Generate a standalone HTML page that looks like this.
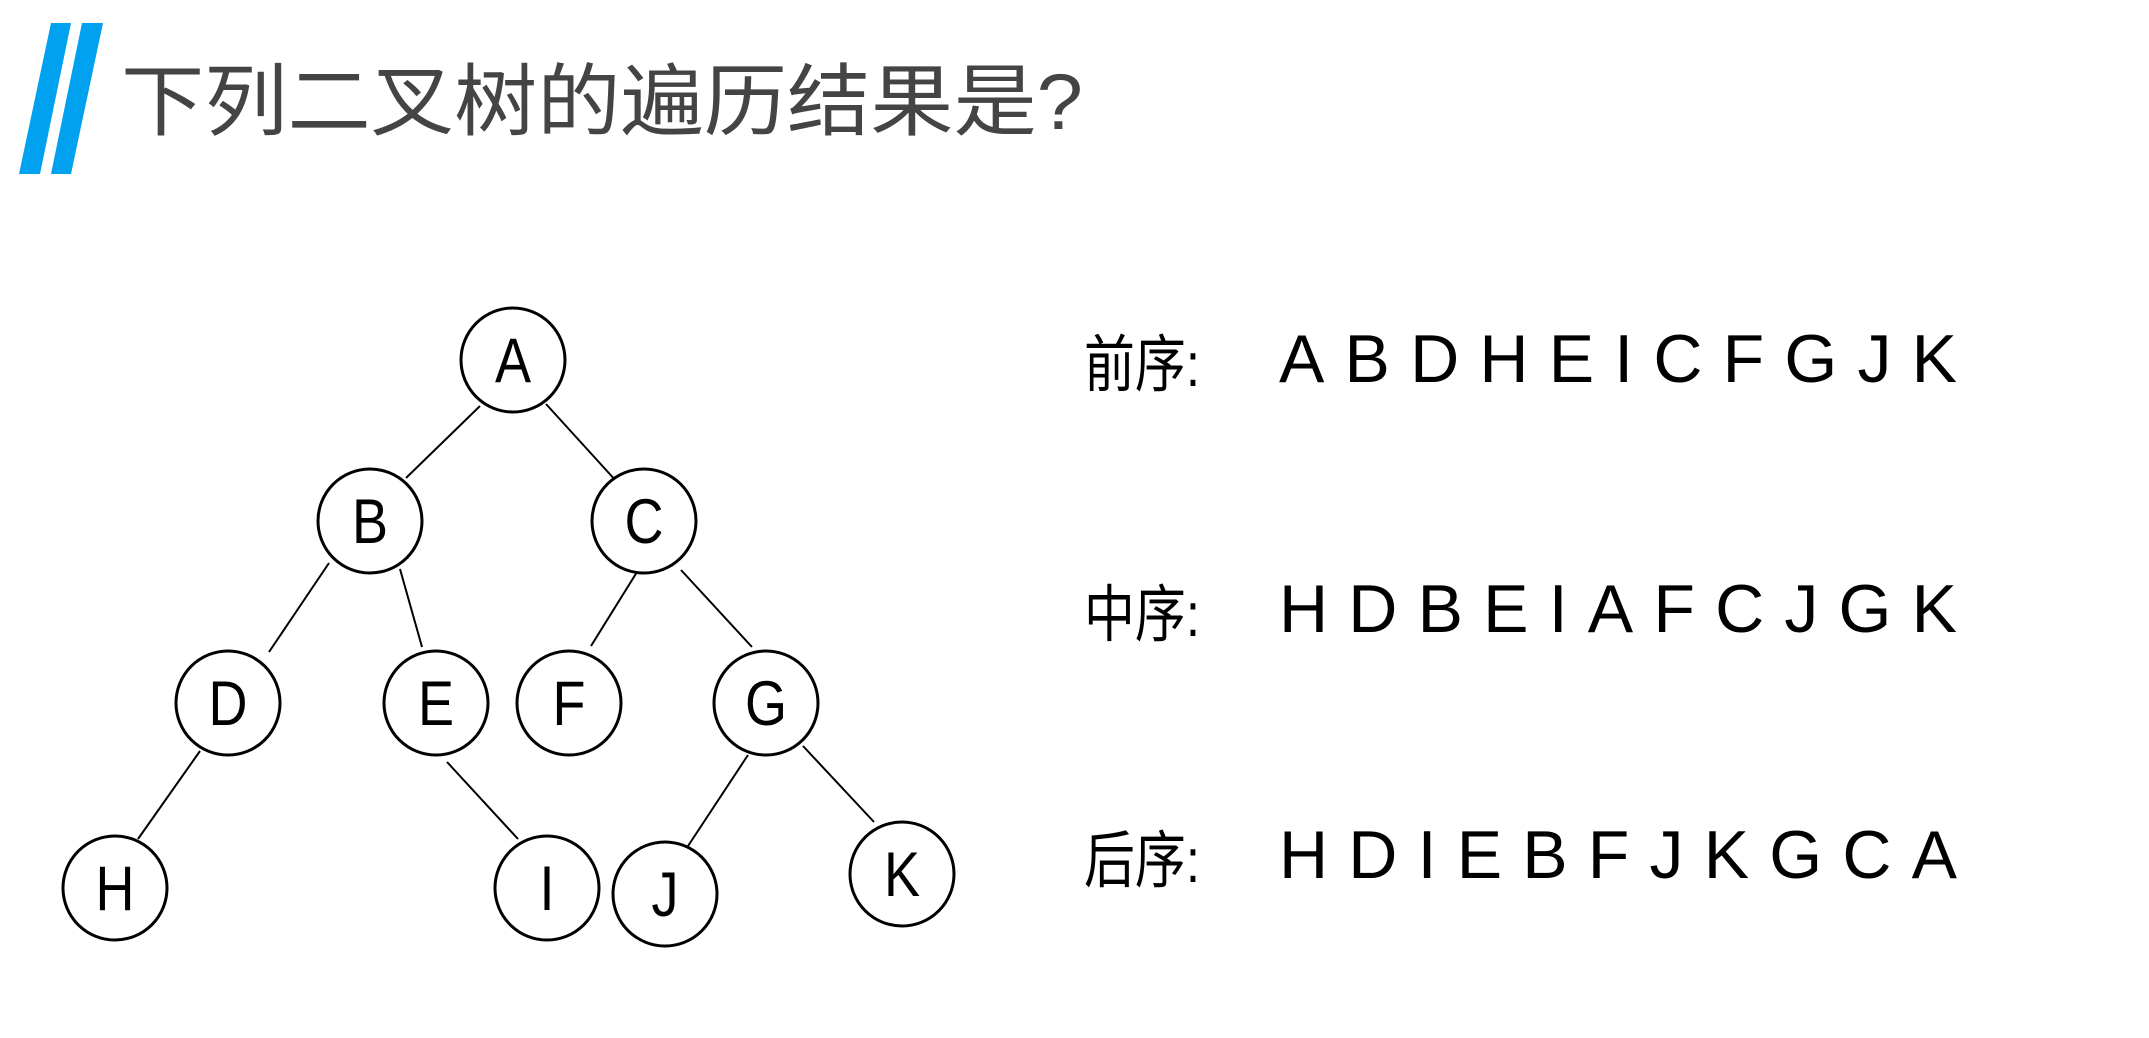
<!DOCTYPE html>
<html><head><meta charset="utf-8"><style>
html,body{margin:0;padding:0;background:#fff;width:2149px;height:1038px;overflow:hidden}
svg{display:block}
</style></head><body>
<svg width="2149" height="1038" viewBox="0 0 2149 1038" xmlns="http://www.w3.org/2000/svg">
<polygon points="51,23 71,23 40,174 19,174" fill="#00a2ef"/>
<polygon points="82,23 103,23 71,174 51,174" fill="#00a2ef"/>
<text x="121" y="130" font-family="Liberation Sans, Noto Sans CJK SC, sans-serif" font-size="72" fill="#444" textLength="962" lengthAdjust="spacingAndGlyphs" transform="translate(0,-14) scale(1,1.1)">下列二叉树的遍历结果是?</text>
<g stroke="#000" stroke-width="2" fill="none">
<line x1="480" y1="406" x2="406" y2="478"/>
<line x1="546" y1="404" x2="617" y2="482"/>
<line x1="329" y1="563" x2="269" y2="652"/>
<line x1="400" y1="569" x2="422" y2="647"/>
<line x1="637" y1="572" x2="591" y2="646"/>
<line x1="681" y1="570" x2="752" y2="647"/>
<line x1="200" y1="751" x2="138" y2="839"/>
<line x1="447" y1="762" x2="518" y2="839"/>
<line x1="748" y1="755" x2="688" y2="846"/>
<line x1="803" y1="746" x2="874" y2="822"/>
</g>
<g stroke="#000" stroke-width="3" fill="#fff">
<circle cx="513" cy="360" r="52"/>
<circle cx="370" cy="521" r="52"/>
<circle cx="644" cy="521" r="52"/>
<circle cx="228" cy="703" r="52"/>
<circle cx="436" cy="703" r="52"/>
<circle cx="569" cy="703" r="52"/>
<circle cx="766" cy="703" r="52"/>
<circle cx="115" cy="888" r="52"/>
<circle cx="547" cy="888" r="52"/>
<circle cx="665" cy="894" r="52"/>
<circle cx="902" cy="874" r="52"/>
</g>
<g font-family="Liberation Sans, sans-serif" font-size="60" fill="#000" text-anchor="middle">
<text transform="translate(513,382) scale(0.9,1.05)">A</text>
<text transform="translate(370,543) scale(0.9,1.05)">B</text>
<text transform="translate(644,543) scale(0.9,1.05)">C</text>
<text transform="translate(228,725) scale(0.9,1.05)">D</text>
<text transform="translate(436,725) scale(0.9,1.05)">E</text>
<text transform="translate(569,725) scale(0.9,1.05)">F</text>
<text transform="translate(766,725) scale(0.9,1.05)">G</text>
<text transform="translate(115,910) scale(0.9,1.05)">H</text>
<text transform="translate(547,910) scale(0.9,1.05)">I</text>
<text transform="translate(665,916) scale(0.9,1.05)">J</text>
<text transform="translate(902,896) scale(0.9,1.05)">K</text>
</g>
<g font-family="Liberation Sans, Noto Sans CJK SC, sans-serif" fill="#000">
<text x="1084" y="386" font-size="62" textLength="116" lengthAdjust="spacingAndGlyphs">前序:</text>
<text x="1279" y="382" font-size="68" textLength="678" lengthAdjust="spacing">ABDHEICFGJK</text>
<text x="1084" y="636" font-size="62" textLength="116" lengthAdjust="spacingAndGlyphs">中序:</text>
<text x="1279" y="632" font-size="68" textLength="678" lengthAdjust="spacing">HDBEIAFCJGK</text>
<text x="1084" y="882" font-size="62" textLength="116" lengthAdjust="spacingAndGlyphs">后序:</text>
<text x="1279" y="878" font-size="68" textLength="678" lengthAdjust="spacing">HDIEBFJKGCA</text>
</g>
</svg>
</body></html>
